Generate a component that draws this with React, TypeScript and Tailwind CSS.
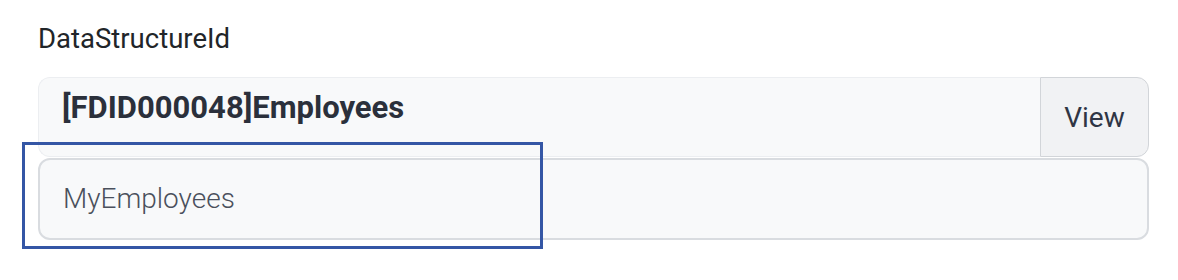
export default function App() {
  return (
    <div className="relative h-[280px] w-[1178px] bg-white font-['Roboto',sans-serif]">
      <div className="flex flex-col pl-[38px] pr-[29px] pt-[22px]">
        {/* ラベル */}
        <div className="h-[55px] text-[27.5px] leading-[34px] text-[#212529]">DataStructureId</div>

        {/* 選択済みの構造 + View ボタン */}
        <div className="flex h-[80px]">
          <div className="flex flex-1 items-center rounded-l-[12px] border border-r-0 border-[#eceef1] bg-[#f8f9fa] pb-[17px] pl-[23px] text-[31px] font-bold text-[#2b303b]">
            [FDID000048]Employees
          </div>
          <button className="flex w-[109px] items-center justify-center rounded-r-[12px] border border-[#d2d5d9] bg-[#f1f2f4] pt-[2px] text-[28px] text-[#2f3544]">
            View
          </button>
        </div>

        {/* 別名入力 */}
        <div className="mt-[1px] flex h-[82px] items-center rounded-[12px] border-2 border-[#d9dce0] bg-[#f8f9fa] pl-[23px] text-[28px] font-light text-[#4a505c]">
          MyEmployees
        </div>
      </div>

      {/* ハイライト枠 */}
      <div className="absolute left-[22px] top-[142px] h-[107px] w-[521px] border-[3px] border-[#3456a5]" />
    </div>
  );
}
